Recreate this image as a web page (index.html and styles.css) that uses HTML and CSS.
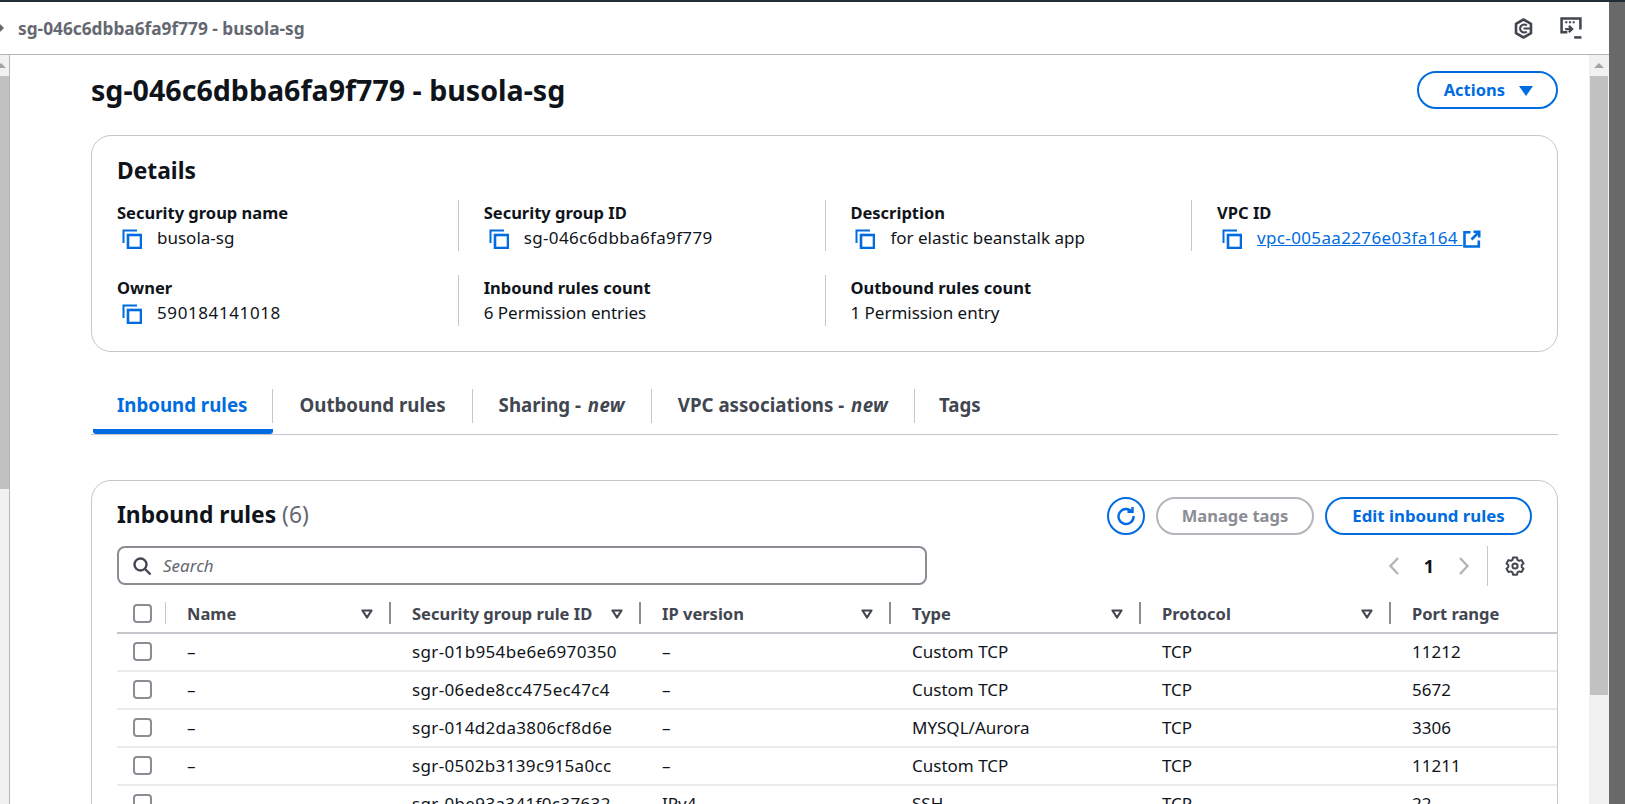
FILE: index.html
```html
<!DOCTYPE html>
<html lang="en">
<head>
    <meta charset="UTF-8">
    <title>sg-046c6dbba6fa9f779 - busola-sg</title>
    <link rel="stylesheet" href="styles.css">
</head>
<body>
    <svg class="sprite" width="0" height="0">
        <symbol id="copy" viewBox="0 0 20 20">
            <path d="M1.500 14V1.500H15" fill="none" stroke="currentColor" stroke-width="2"/>
            <rect x="6" y="6" width="13" height="13" fill="none" stroke="currentColor" stroke-width="2.600"/>
        </symbol>
        <symbol id="sort" viewBox="0 0 12 10">
            <path d="M1.500 1.500h9L6 8.500z" fill="none" stroke="currentColor" stroke-width="2.200" stroke-linejoin="round"/>
        </symbol>
    </svg>
    <div class="window">
        <div class="main">
            <header class="split-header">
                <span class="caret"></span>
                <span class="split-title">sg-046c6dbba6fa9f779 - busola-sg</span>
                <svg class="hex-icon" width="19" height="21" viewBox="0 0 19 21">
                    <path d="M9.500 1.500l7.500 4.300v9.400l-7.500 4.300L2 15.200V5.800z" fill="none" stroke="currentColor" stroke-width="2.600" stroke-linejoin="round"/>
                    <path d="M12.800 7.500a4 4 0 1 0 0 6M9.500 10.500h6.500" fill="none" stroke="currentColor" stroke-width="2.200"/>
                </svg>
                <svg class="term-icon" width="22" height="22" viewBox="0 0 21 21">
                    <path d="M7 14.500H1.500V1.500h18V12" fill="none" stroke="currentColor" stroke-width="2.400"/>
                    <path d="M5 5h2M8.500 5h2M12 5h2" stroke="currentColor" stroke-width="2"/>
                    <path d="M5 11.500h6M8.500 8.500l3 3-3 3" fill="none" stroke="currentColor" stroke-width="2.200"/>
                    <path d="M13.500 19.500H20.500" stroke="currentColor" stroke-width="2.400"/>
                </svg>
            </header>
            <div class="split-body">
                <div class="scroll scroll-left"><span class="thumb"></span></div>
                <main class="content">
                    <div class="page-head">
                        <h1>sg-046c6dbba6fa9f779 - busola-sg</h1>
                        <button class="btn btn-actions">Actions <span class="tri"></span></button>
                    </div>

                    <section class="card details">
                        <h2>Details</h2>
                        <div class="kv-grid">
                            <div class="kv">
                                <b>Security group name</b>
                                <span class="val"><svg class="copy"><use href="#copy"/></svg>busola-sg</span>
                            </div>
                            <div class="kv">
                                <b>Security group ID</b>
                                <span class="val"><svg class="copy"><use href="#copy"/></svg><span class="id">sg-046c6dbba6fa9f779</span></span>
                            </div>
                            <div class="kv">
                                <b>Description</b>
                                <span class="val"><svg class="copy"><use href="#copy"/></svg>for elastic beanstalk app</span>
                            </div>
                            <div class="kv">
                                <b>VPC ID</b>
                                <span class="val"><svg class="copy"><use href="#copy"/></svg><a class="id" href="#">vpc-005aa2276e03fa164 </a>
                                    <svg class="ext" width="18" height="18" viewBox="0 0 18 18">
                                        <path d="M7.500 2.200H1.500v14.300H15.800V10.500" fill="none" stroke="currentColor" stroke-width="2.600"/>
                                        <path d="M10.500 1.800h5.700V7.500M16 2L8.500 9.500" fill="none" stroke="currentColor" stroke-width="2.600"/>
                                    </svg>
                                </span>
                            </div>
                            <div class="kv">
                                <b>Owner</b>
                                <span class="val"><svg class="copy"><use href="#copy"/></svg><span class="num">590184141018</span></span>
                            </div>
                            <div class="kv">
                                <b>Inbound rules count</b>
                                <span class="val">6 Permission entries</span>
                            </div>
                            <div class="kv">
                                <b>Outbound rules count</b>
                                <span class="val">1 Permission entry</span>
                            </div>
                        </div>
                    </section>

                    <nav class="tabs">
                        <a class="tab active" href="#"><span>Inbound rules</span></a>
                        <a class="tab" href="#"><span>Outbound rules</span></a>
                        <a class="tab" href="#"><span>Sharing - <i>new</i></span></a>
                        <a class="tab" href="#"><span>VPC associations - <i>new</i></span></a>
                        <a class="tab last" href="#"><span>Tags</span></a>
                    </nav>

                    <section class="card rules">
                        <div class="rules-head">
                            <h2>Inbound rules <span class="count">(6)</span></h2>
                            <div class="rules-actions">
                                <button class="btn btn-icon">
                                    <svg width="20" height="20" viewBox="0 0 20 20">
                                        <path d="M16 6A7.500 7.500 0 1 0 17.500 10" fill="none" stroke="currentColor" stroke-width="2.400"/>
                                        <path d="M11.500 5.800H16.500V1" fill="none" stroke="currentColor" stroke-width="2.400"/>
                                    </svg>
                                </button>
                                <button class="btn btn-disabled">Manage tags</button>
                                <button class="btn btn-edit">Edit inbound rules</button>
                            </div>
                        </div>
                        <div class="filter-row">
                            <div class="search">
                                <svg width="20" height="20" viewBox="0 0 20 20">
                                    <circle cx="8.500" cy="8.500" r="6" fill="none" stroke="currentColor" stroke-width="2.400"/>
                                    <path d="M13 13l5.500 5.500" stroke="currentColor" stroke-width="2.400"/>
                                </svg>
                                <span>Search</span>
                            </div>
                            <div class="pager">
                                <svg width="12" height="20" viewBox="0 0 12 20"><path d="M10 2L2.500 10l7.500 8" fill="none" stroke="currentColor" stroke-width="2.400"/></svg>
                                <b>1</b>
                                <svg width="12" height="20" viewBox="0 0 12 20"><path d="M2 2l7.500 8L2 18" fill="none" stroke="currentColor" stroke-width="2.400"/></svg>
                                <span class="pager-sep"></span>
                                <svg class="gear" width="20" height="20" viewBox="0 0 20 20">
                                    <path d="M8 1.500h4l.5 2.300 1.700 1 2.300-.7 2 3.400-1.800 1.600v2l1.800 1.600-2 3.400-2.300-.7-1.700 1-.5 2.300H8l-.5-2.300-1.700-1-2.300.7-2-3.400 1.800-1.600v-2L1.500 7.500l2-3.400 2.300.7 1.700-1z" fill="none" stroke="currentColor" stroke-width="2" stroke-linejoin="round"/>
                                    <circle cx="10" cy="10" r="2.600" fill="none" stroke="currentColor" stroke-width="2"/>
                                </svg>
                            </div>
                        </div>
                        <table>
                            <colgroup>
                                <col class="c-check"><col class="c-name"><col class="c-std"><col class="c-std"><col class="c-std"><col class="c-std"><col>
                            </colgroup>
                            <thead>
                                <tr>
                                    <th><div class="th-in th-check"><span class="box"></span></div></th>
                                    <th><div class="th-in">Name<svg class="sort"><use href="#sort"/></svg></div></th>
                                    <th><div class="th-in">Security group rule ID<svg class="sort"><use href="#sort"/></svg></div></th>
                                    <th><div class="th-in">IP version<svg class="sort"><use href="#sort"/></svg></div></th>
                                    <th><div class="th-in">Type<svg class="sort"><use href="#sort"/></svg></div></th>
                                    <th><div class="th-in">Protocol<svg class="sort"><use href="#sort"/></svg></div></th>
                                    <th><div class="th-in th-last">Port range</div></th>
                                </tr>
                            </thead>
                            <tbody>
                                <tr><td><span class="box"></span></td><td>–</td><td class="id">sgr-01b954be6e6970350</td><td>–</td><td>Custom TCP</td><td>TCP</td><td>11212</td></tr>
                                <tr><td><span class="box"></span></td><td>–</td><td class="id">sgr-06ede8cc475ec47c4</td><td>–</td><td>Custom TCP</td><td>TCP</td><td>5672</td></tr>
                                <tr><td><span class="box"></span></td><td>–</td><td class="id">sgr-014d2da3806cf8d6e</td><td>–</td><td>MYSQL/Aurora</td><td>TCP</td><td>3306</td></tr>
                                <tr><td><span class="box"></span></td><td>–</td><td class="id">sgr-0502b3139c915a0cc</td><td>–</td><td>Custom TCP</td><td>TCP</td><td>11211</td></tr>
                                <tr><td><span class="box"></span></td><td>–</td><td class="id">sgr-0be93a341f0c37632</td><td>IPv4</td><td>SSH</td><td>TCP</td><td>22</td></tr>
                            </tbody>
                        </table>
                    </section>
                </main>
                <div class="scroll scroll-right"><span class="thumb"></span></div>
            </div>
        </div>
        <div class="edge"></div>
    </div>
</body>
</html>
```
FILE: styles.css
```css
html, body {
    height: 100%;
}
body {
    margin: 0;
    overflow: hidden;
    font-family: "Noto Sans", Arial, sans-serif;
    font-size: 17px;
    color: #0f141a;
    background: white;
    border-top: 2px solid #232b37;
    box-sizing: border-box;
}
.sprite {
    display: block;
    height: 0;
}
.window {
    display: flex;
    height: 802px;
}
.main {
    flex: 1;
    min-width: 0;
    display: flex;
    flex-direction: column;
}
.edge {
    width: 16px;
    background: #696969;
}

/* split panel header */
.split-header {
    height: 52px;
    flex: none;
    display: flex;
    align-items: center;
    border-bottom: 1px solid #b4b4bb;
    color: #424650;
}
.caret {
    width: 0;
    height: 0;
    border: 4px solid transparent;
    border-left-color: #656871;
    border-right: 0;
    margin-right: 14px;
}
.split-title {
    flex: 1;
    font-weight: 700;
    font-size: 17.300px;
    color: #656871;
}
.hex-icon {
    margin-right: 27px;
}
.term-icon {
    margin-right: 27px;
}

.split-body {
    flex: 1;
    min-height: 0;
    display: flex;
}
.scroll {
    flex: none;
    background: #f1f1f1;
    padding-top: 8px;
    box-sizing: border-box;
}
.scroll::before {
    content: "";
    display: block;
    width: 0;
    height: 0;
    border: 5px solid transparent;
    border-bottom-color: #a3a3a3;
    border-top: 0;
    margin: 0 auto 8px;
}
.thumb {
    display: block;
    background: #c1c1c1;
}
.scroll-left {
    width: 10px;
    border-right: 1px solid #b4b4bb;
}
.scroll-left::before {
    margin-left: -4px;
}
.scroll-left .thumb {
    height: 413px;
}
.scroll-right {
    width: 20px;
    padding-left: 1px;
    padding-right: 1px;
}
.scroll-right .thumb {
    height: 619px;
}
.content {
    flex: 1;
    min-width: 0;
    padding: 0 31px 0 81px;
    overflow: hidden;
}

.page-head {
    display: flex;
    justify-content: space-between;
    align-items: center;
    padding-top: 16px;
    height: 38px;
}
h1 {
    margin: 0;
    font-size: 28.600px;
    line-height: 36px;
    font-weight: 700;
}
.btn {
    font-family: inherit;
    font-size: 16.500px;
    font-weight: 700;
    height: 38px;
    border: 2px solid #006ce0;
    border-radius: 20px;
    background: white;
    color: #006ce0;
    padding: 0 0 2px;
    box-sizing: border-box;
}
.btn-actions {
    width: 141px;
    padding-left: 2px;
}
.tri {
    display: inline-block;
    width: 0;
    height: 0;
    border: 7px solid transparent;
    border-top: 10px solid #006ce0;
    border-bottom: 0;
    margin-left: 10px;
}

.card {
    border: 1px solid #c6c6cd;
    border-radius: 20px;
    background: white;
}
.details {
    margin-top: 26px;
    height: 217px;
    padding: 20px 25px;
    box-sizing: border-box;
}
h2 {
    margin: 0;
    font-size: 22.800px;
    line-height: 30px;
    font-weight: 700;
}
.kv-grid {
    display: grid;
    grid-template-columns: repeat(4, 342px);
    column-gap: 24.700px;
    row-gap: 24px;
    margin-top: 14px;
}
.kv {
    display: flex;
    flex-direction: column;
    height: 51px;
    line-height: 25px;
    border-right: 1px solid #c6c6cd;
}
.kv:nth-child(4), .kv:nth-child(7) {
    border-right: 0;
}
.kv b {
    font-weight: 700;
    font-size: 16.500px;
}
.val {
    display: flex;
    align-items: center;
}
.copy {
    width: 20px;
    height: 20px;
    color: #006ce0;
    margin: 3px 15px 0 5px;
    flex: none;
}
.id {
    letter-spacing: .35px;
}
.num {
    letter-spacing: .6px;
}
.val a {
    color: #006ce0;
    white-space: pre;
}
.ext {
    color: #006ce0;
    margin: 2px 0 0 0;
}

.tabs {
    display: flex;
    margin-top: 34px;
    height: 48px;
    border-bottom: 1px solid #c6c6cd;
}
.tab {
    height: 48px;
    box-sizing: border-box;
    padding: 0 27px 12px 26px;
    display: flex;
    align-items: center;
    text-decoration: none;
    font-size: 18.700px;
    font-weight: 700;
    color: #424650;
    position: relative;
}
.tab i {
    letter-spacing: .3px;
    margin-left: 2px;
}
.tab:first-child {
    margin-left: 2px;
    padding-left: 24px;
    padding-right: 26px;
}
.tab.last {
    padding-left: 24px;
}
.tab::after {
    content: "";
    position: absolute;
    right: 0;
    top: 3px;
    height: 34px;
    width: 1px;
    background: #c6c6cd;
}
.tab.last::after {
    display: none;
}
.tab.active {
    color: #006ce0;
    border-bottom: 5px solid #006ce0;
    border-radius: 3px;
    padding-bottom: 7px;
}

.rules {
    margin-top: 45px;
    height: 400px;
    padding: 16px 0 0 25px;
    overflow: hidden;
    box-sizing: border-box;
}
.rules-head {
    display: flex;
    justify-content: space-between;
    align-items: center;
    padding-right: 25px;
    height: 38px;
}
.rules-head h2 {
    padding-bottom: 3px;
}
.count {
    font-weight: 400;
    color: #656871;
}
.rules-actions {
    display: flex;
    gap: 11px;
}
.btn-icon {
    width: 38px;
    padding: 0;
    display: flex;
    align-items: center;
    justify-content: center;
}
.btn-disabled {
    width: 158px;
    color: #8c8c94;
    border-color: #b4b4bb;
}
.btn-edit {
    width: 207px;
    font-size: 16.800px;
}
.filter-row {
    display: flex;
    justify-content: space-between;
    align-items: center;
    margin-top: 11px;
    height: 39px;
    padding-right: 32px;
}
.search {
    width: 810px;
    height: 39px;
    box-sizing: border-box;
    border: 2px solid #8c8c94;
    border-radius: 8px;
    display: flex;
    align-items: center;
    gap: 11px;
    padding-left: 13px;
    color: #424650;
}
.search span {
    font-style: italic;
    color: #656871;
}
.pager {
    display: flex;
    align-items: center;
    color: #b4b4bb;
}
.pager b {
    color: #0f141a;
    width: 58px;
    text-align: center;
    font-size: 18px;
}
.pager-sep {
    width: 1px;
    height: 40px;
    background: #c6c6cd;
    margin: 0 17px;
}
.gear {
    color: #424650;
}

table {
    width: 100%;
    table-layout: fixed;
    border-collapse: collapse;
    margin-top: 9px;
}
.c-check {
    width: 49px;
}
.c-name {
    width: 225px;
}
.c-std {
    width: 250px;
}
th {
    padding: 0;
    height: 38px;
    border-bottom: 2px solid #c6c6cd;
    text-align: left;
    color: #424650;
    font-weight: 700;
    font-size: 16.500px;
}
.th-in {
    height: 22px;
    line-height: 22px;
    box-sizing: border-box;
    display: flex;
    justify-content: space-between;
    align-items: center;
    padding: 2px 16px 0 21px;
    border-right: 2px solid #8c8c94;
    white-space: nowrap;
}
.th-check {
    padding: 0 0 0 16px;
    border-right: 1px solid #c6c6cd;
    justify-content: flex-start;
}
.th-last {
    border-right: 0;
}
.sort {
    width: 12px;
    height: 10px;
    flex: none;
    color: #424650;
}
.box {
    display: block;
    width: 19px;
    height: 19px;
    box-sizing: border-box;
    border: 2px solid #8c8c94;
    border-radius: 4px;
}
td {
    padding: 0 0 2px 21px;
    height: 38px;
    box-sizing: border-box;
    border-bottom: 2px solid #e9ebed;
    white-space: nowrap;
}
td:first-child {
    padding-left: 16px;
}
```
